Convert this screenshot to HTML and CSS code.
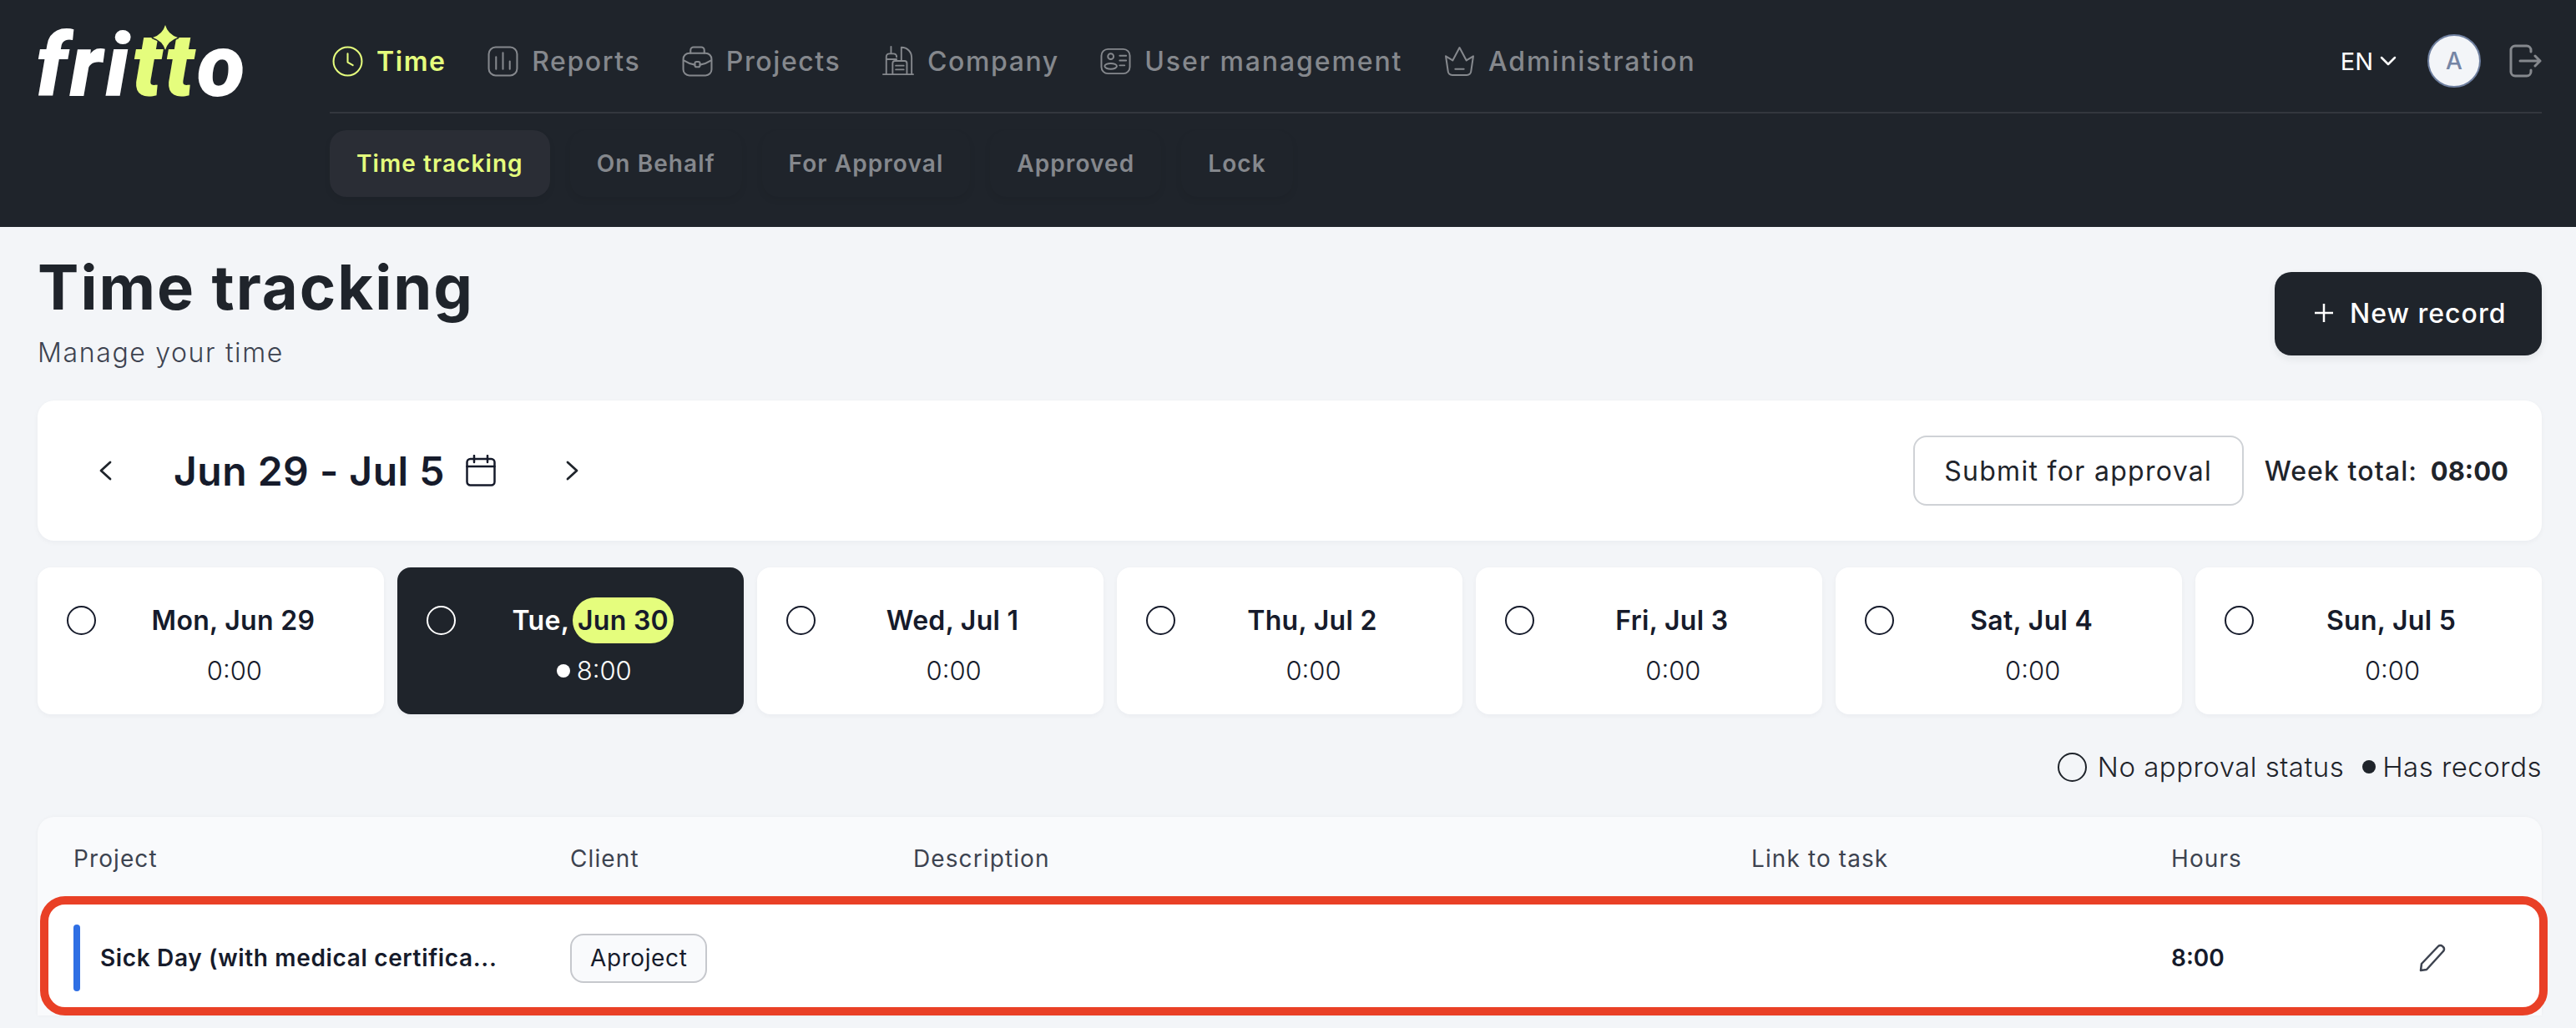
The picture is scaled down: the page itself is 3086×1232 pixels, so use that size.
FILE: index.html
```html
<!DOCTYPE html>
<html lang="en">
<head>
  <meta charset="UTF-8" />
  <title>Time tracking</title>
  <link rel="stylesheet" href="styles.css">
</head>
<body>

<header class="topbar">
  <div class="logo">
    <span>fri</span><span class="logo-accent">tt</span><span>o</span>
    <svg class="logo-star" viewBox="0 0 30 30"><path d="M15 0Q18 11 30 15 18 19 15 30 12 19 0 15 12 11 15 0z"/></svg>
  </div>
  <div class="topbar-main">
    <div class="topbar-row">
      <nav class="nav">
        <a class="nav-item active">
          <svg class="icon" viewBox="0 0 36 36"><circle cx="18" cy="18" r="16.500"/><path d="M18 9v10l6 3.500"/></svg>
          Time
        </a>
        <a class="nav-item">
          <svg class="icon" viewBox="0 0 36 36"><rect x="1.500" y="1.500" width="33" height="33" rx="8"/><path d="M10 13v14M18 8v19M26 18v9"/></svg>
          Reports
        </a>
        <a class="nav-item">
          <svg class="icon" viewBox="0 0 36 36"><rect x="1.500" y="8.500" width="33" height="26" rx="7"/><path d="M10 8.500V5a3.500 3.500 0 0 1 3.500-3.500h9A3.500 3.500 0 0 1 26 5v3.500M2 17q6 4 13 5M34 17q-6 4-13 5"/><rect x="15" y="18.500" width="6" height="6" rx="2"/></svg>
          Projects
        </a>
        <a class="nav-item">
          <svg class="icon icon-company" viewBox="0 0 40 40"><path d="M1 38h38M5 38V16q0-4 4-4h5q4 0 4 4M5 19h13M11 12V3M24 20V4c8 0 13 6 13 13v21"/><path d="M13 38V24q0-3 3-3h12q3 0 3 3v14M17 27h10M17 32h10"/></svg>
          Company
        </a>
        <a class="nav-item nav-item-long">
          <svg class="icon" viewBox="0 0 38 36"><rect x="1.500" y="3" width="35" height="30" rx="8"/><circle cx="13" cy="12" r="3.500"/><ellipse cx="13" cy="24" rx="7.500" ry="3.500"/><path d="M24 11h8M24 17h8M24 23h6"/></svg>
          User management
        </a>
        <a class="nav-item nav-item-long">
          <svg class="icon" viewBox="0 0 36 36"><path d="M2 12l8 5 8-15 8 15 8-5-2.500 17a5 5 0 0 1-5 5h-17a5 5 0 0 1-5-5z"/><path d="M13 27h10"/></svg>
          Administration
        </a>
      </nav>
      <div class="topbar-right">
        <span class="lang">EN
          <svg class="lang-arrow" viewBox="0 0 20 12"><path d="M2 2l8 8 8-8"/></svg>
        </span>
        <div class="avatar">A</div>
        <svg class="logout" viewBox="0 0 40 40"><path d="M27 9V7a5 5 0 0 0-5-5H8a5 5 0 0 0-5 5v26a5 5 0 0 0 5 5h14a5 5 0 0 0 5-5v-2"/><path d="M14 20h24M32 14l6 6-6 6"/></svg>
      </div>
    </div>
    <div class="tabs">
      <a class="tab active">Time tracking</a>
      <a class="tab">On Behalf</a>
      <a class="tab">For Approval</a>
      <a class="tab">Approved</a>
      <a class="tab">Lock</a>
    </div>
  </div>
</header>

<main class="content">
  <div class="page-head">
    <div>
      <h1 class="page-title">Time tracking</h1>
      <p class="page-subtitle">Manage your time</p>
    </div>
    <button class="btn-new">
      <svg class="btn-plus" viewBox="0 0 22 22"><path d="M11 0v22M0 11h22"/></svg>
      New record
    </button>
  </div>

  <section class="week-card">
    <div class="week-nav">
      <svg class="chevron" viewBox="0 0 16 24"><path d="M14 2L3 12l11 10"/></svg>
      <span class="week-range">Jun 29 - Jul 5</span>
      <svg class="calendar" viewBox="0 0 36 38"><rect x="1.500" y="5" width="33" height="31.500" rx="4"/><path d="M1.500 14h33M10 1v8M26 1v8"/></svg>
      <svg class="chevron chevron-next" viewBox="0 0 16 24"><path d="M2 2l11 10L2 22"/></svg>
    </div>
    <div class="week-actions">
      <button class="btn-submit">Submit for approval</button>
      <span class="week-total">Week total: <b>08:00</b></span>
    </div>
  </section>

  <section class="days">
    <div class="day">
      <span class="ring"></span>
      <div class="day-date">Mon, Jun 29</div>
      <div class="day-hours">0:00</div>
    </div>
    <div class="day selected">
      <span class="ring"></span>
      <div class="day-date">Tue, <span class="today">Jun 30</span></div>
      <div class="day-hours"><span class="dot"></span>8:00</div>
    </div>
    <div class="day">
      <span class="ring"></span>
      <div class="day-date">Wed, Jul 1</div>
      <div class="day-hours">0:00</div>
    </div>
    <div class="day">
      <span class="ring"></span>
      <div class="day-date">Thu, Jul 2</div>
      <div class="day-hours">0:00</div>
    </div>
    <div class="day">
      <span class="ring"></span>
      <div class="day-date">Fri, Jul 3</div>
      <div class="day-hours">0:00</div>
    </div>
    <div class="day">
      <span class="ring"></span>
      <div class="day-date">Sat, Jul 4</div>
      <div class="day-hours">0:00</div>
    </div>
    <div class="day">
      <span class="ring"></span>
      <div class="day-date">Sun, Jul 5</div>
      <div class="day-hours">0:00</div>
    </div>
  </section>

  <div class="legend">
    <span class="ring ring-legend"></span>
    <span>No approval status</span>
    <span class="dot dot-legend"></span>
    <span>Has records</span>
  </div>

  <section class="table">
    <div class="table-head">
      <div>Project</div>
      <div>Client</div>
      <div>Description</div>
      <div>Link to task</div>
      <div>Hours</div>
    </div>
    <div class="table-row">
      <div class="project">
        <span class="project-bar"></span>
        <span class="project-name">Sick Day (with medical certifica...</span>
      </div>
      <div><span class="chip">Aproject</span></div>
      <div></div>
      <div></div>
      <div class="hours">8:00</div>
      <svg class="edit" viewBox="0 0 32 34"><path d="M2 32l1-8L23 3a3.500 3.500 0 0 1 5 0l1 1a3.500 3.500 0 0 1 0 5L9 31z"/></svg>
    </div>
  </section>
</main>

</body>
</html>
```

FILE: styles.css
```css
* {
  box-sizing: border-box;
}

html,
body {
  margin: 0;
  height: 1232px;
  overflow: hidden;
}

body {
  background-color: #f3f5f8;
  color: #1f242b;
  font-family: "Inter", "Noto Sans", sans-serif;
}

svg {
  display: block;
  flex: none;
  fill: none;
  stroke: currentColor;
  stroke-linecap: round;
  stroke-linejoin: round;
}

/* topo */
.topbar {
  display: flex;
  height: 272px;
  padding-right: 41px;
  background-color: #1f242b;
}

.logo {
  position: relative;
  display: flex;
  width: 395px;
  height: 130px;
  padding: 24px 0 0 43px;
  color: #fff;
  font-family: "Roboto", sans-serif;
  font-size: 106px;
  font-style: italic;
  font-weight: 900;
  line-height: 110px;
  letter-spacing: 3.500px;
}

.logo-accent {
  color: #e5fd7d;
}

.logo-star {
  position: absolute;
  top: 30px;
  left: 183px;
  width: 30px;
  height: 30px;
  fill: #e5fd7d;
  stroke: #1f242b;
  stroke-width: 3;
  paint-order: stroke;
  overflow: visible;
}

.topbar-main {
  flex: 1;
}

.topbar-row {
  display: flex;
  justify-content: space-between;
  align-items: center;
  height: 136px;
  padding-top: 12px;
  border-bottom: 2px solid #33373e;
}

.nav {
  display: flex;
  gap: 49.500px;
  padding-left: 3px;
}

.nav-item {
  display: flex;
  align-items: center;
  gap: 16px;
  color: #85888d;
  font-size: 32px;
  font-weight: 500;
  letter-spacing: 1.600px;
  white-space: nowrap;
}

.nav-item-long {
  letter-spacing: 1.900px;
}

.nav-item.active {
  color: #e5fd7d;
  font-weight: 600;
}

.icon {
  width: 37px;
  height: 37px;
  stroke-width: 2;
}

.icon-company {
  width: 38px;
  height: 38px;
  margin-top: -3px;
}

.topbar-right {
  display: flex;
  align-items: center;
}

.lang {
  display: flex;
  align-items: center;
  gap: 8px;
  margin-right: 37px;
  color: #fff;
  font-size: 29px;
}

.lang-arrow {
  width: 20px;
  height: 12px;
  stroke-width: 2.500;
}

.avatar {
  display: flex;
  justify-content: center;
  align-items: center;
  width: 64px;
  height: 64px;
  margin-right: 33px;
  border: 2px solid #6e7f9f;
  border-radius: 50%;
  background-color: #f3f5f8;
  color: #7585a5;
  font-size: 28px;
  font-weight: 500;
}

.logout {
  width: 40px;
  height: 40px;
  color: #85888d;
  stroke-width: 3;
}

.tabs {
  display: flex;
  gap: 24px;
  margin-top: 20px;
}

.tab {
  display: flex;
  align-items: center;
  height: 80px;
  padding: 0 32px;
  border-radius: 20px;
  color: #85888d;
  font-size: 28px;
  font-weight: 600;
  letter-spacing: 1.080px;
  box-shadow: 0 4px 8px rgba(0, 0, 0, 0.06);
}

.tab.active {
  background-color: #2a2d35;
  color: #e5fd7d;
}

/* conteudo */
.content {
  padding: 28px 41px 0 45px;
}

.page-head {
  display: flex;
  justify-content: space-between;
  align-items: flex-start;
  margin-bottom: 37px;
}

.page-title {
  margin: 0;
  font-size: 74px;
  font-weight: 700;
  line-height: 88px;
  letter-spacing: 2px;
}

.page-subtitle {
  margin: 15px 0 0;
  color: #3d4350;
  font-size: 32px;
  font-weight: 300;
  line-height: 40px;
  letter-spacing: 1.650px;
}

.btn-new {
  display: flex;
  align-items: center;
  gap: 20px;
  width: 320px;
  height: 100px;
  margin-top: 26px;
  padding: 0 0 2px 48px;
  border: 0;
  border-radius: 20px;
  background-color: #1f242b;
  color: #fff;
  font: inherit;
  font-size: 32px;
  font-weight: 500;
  letter-spacing: 1px;
  box-shadow: 0 4px 10px rgba(31, 36, 43, 0.08);
}

.btn-plus {
  width: 22px;
  height: 22px;
  stroke-width: 2.500;
  stroke-linecap: butt;
}

.week-card {
  display: flex;
  justify-content: space-between;
  align-items: center;
  height: 168px;
  padding: 0 40px 0 73px;
  border-radius: 20px;
  background-color: #fff;
  box-shadow: 0 2px 6px rgba(31, 36, 43, 0.04);
}

.week-nav {
  display: flex;
  align-items: center;
}

.chevron {
  width: 16px;
  height: 24px;
  stroke-width: 2.800;
}

.chevron-next {
  margin-left: 84px;
}

.week-range {
  width: 350px;
  margin-left: 74px;
  color: #161b2b;
  font-size: 48px;
  font-weight: 600;
  letter-spacing: 0.500px;
}

.calendar {
  width: 36px;
  height: 38px;
  color: #161b2b;
  stroke-width: 2.500;
}

.week-actions {
  display: flex;
  align-items: center;
  gap: 25px;
}

.btn-submit {
  width: 396px;
  height: 84px;
  border: 2px solid #cfd2d6;
  border-radius: 16px;
  background-color: #fff;
  color: #1f242b;
  font: inherit;
  font-size: 32px;
  letter-spacing: 1.300px;
}

.week-total {
  font-size: 32px;
  font-weight: 500;
  letter-spacing: 1.100px;
  white-space: pre;
}

.week-total b {
  margin-left: 6px;
  font-size: 31px;
  font-weight: 700;
  letter-spacing: 0;
}

.days {
  display: grid;
  grid-template-columns: repeat(7, 1fr);
  gap: 16px;
  margin-top: 32px;
}

.day {
  display: grid;
  grid-template-columns: 35px 1fr;
  grid-template-rows: 55px 40px;
  row-gap: 13px;
  height: 176px;
  padding: 36px 16px 0 35px;
  border-radius: 16px;
  background-color: #fff;
  color: #161b2b;
  text-align: center;
  box-shadow: 0 2px 6px rgba(31, 36, 43, 0.04);
}

.day.selected {
  background-color: #1f242b;
  color: #fff;
}

.ring {
  display: block;
  align-self: center;
  width: 35px;
  height: 35px;
  border: 2.500px solid currentColor;
  border-radius: 50%;
}

.day-date {
  font-size: 32px;
  font-weight: 600;
  line-height: 55px;
  letter-spacing: 0.300px;
}

.day-hours {
  grid-column: 2;
  padding-left: 3px;
  font-size: 31px;
  font-weight: 300;
  line-height: 40px;
}

.today {
  display: inline-block;
  margin-left: -4px;
  padding: 0 6px;
  border-radius: 28px;
  background-color: #e5fd7d;
  color: #161b2b;
}

.dot {
  display: inline-block;
  width: 16px;
  height: 16px;
  margin-right: 8px;
  border-radius: 50%;
  background-color: currentColor;
  vertical-align: 3px;
}

.legend {
  display: flex;
  justify-content: flex-end;
  align-items: center;
  height: 40px;
  margin-top: 43px;
  font-size: 33px;
  font-weight: 300;
  letter-spacing: 0.480px;
}

.ring-legend {
  margin-right: 13px;
}

.dot-legend {
  margin: 0 8px 0 22px;
}

.table {
  margin-top: 40px;
  border-radius: 20px 20px 0 0;
  background-color: #f9fafc;
  box-shadow: 0 0 4px rgba(31, 36, 43, 0.04);
}

.table-head,
.table-row {
  display: grid;
  grid-template-columns: 595px 411px 1004px 503px 297px 1fr;
  align-items: center;
}

.table-head {
  height: 95px;
  padding: 4px 0 0 43px;
  color: #3d4350;
  font-size: 28px;
  letter-spacing: 1.100px;
}

/* a moldura vermelha passa um pouco da tabela */
.table-row {
  height: 143px;
  margin: 0 -7px 0 3px;
  padding: 5px 0 0 30px;
  border: 10px solid #e94026;
  border-radius: 30px;
  background-color: #fff;
  color: #161b2b;
  font-size: 28px;
}

.project {
  display: flex;
  align-items: center;
  gap: 24px;
}

.project-bar {
  width: 8px;
  height: 80px;
  border-radius: 4px;
  background-color: #2f6fe4;
}

.project-name {
  font-weight: 600;
  letter-spacing: 0.650px;
  white-space: nowrap;
}

.chip {
  display: inline-block;
  padding: 0 22px;
  border: 2px solid #c6c8cd;
  border-radius: 16px;
  background-color: #f9fafc;
  line-height: 55px;
  letter-spacing: 0.600px;
}

.hours {
  font-weight: 600;
}

.edit {
  width: 32px;
  height: 34px;
  color: #3d4350;
  stroke-width: 2.500;
}
```
